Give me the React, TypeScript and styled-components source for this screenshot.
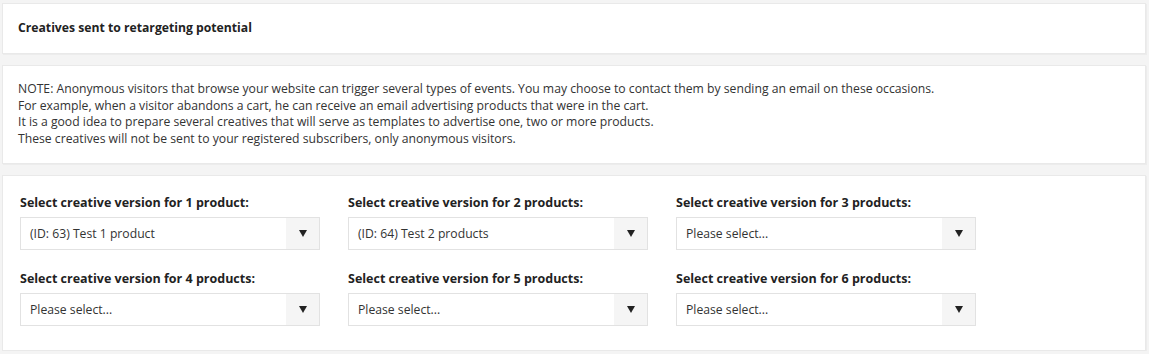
import React from "react";
import styled, { createGlobalStyle } from "styled-components";

const Global = createGlobalStyle`
  html, body { margin: 0; padding: 0; background: #f4f4f4; }
  body { font-family: "Open Sans", "DejaVu Sans", sans-serif; color: #333; }
`;

const Page = styled.div`
  display: flex;
  flex-direction: column;
  gap: 11px;
  padding: 3px 3px 0 2px;
`;

const Panel = styled.section<{ $pad: string }>`
  background: #fff;
  border: 1px solid #e9e9e9;
  box-shadow: 1px 1px 0 #ececec;
  padding: ${(p) => p.$pad};
`;

const Title = styled.h2`
  margin: 0;
  font-size: 12.2px;
  line-height: 18px;
  font-weight: 700;
  color: #222;
`;

const Note = styled.p`
  margin: 0;
  font-size: 12.2px;
  line-height: 16.67px;
  color: #333;
`;

const Grid = styled.div`
  display: grid;
  grid-template-columns: repeat(3, 300px);
  column-gap: 28px;
  row-gap: 20px;
`;

const Field = styled.div`
  display: flex;
  flex-direction: column;
  gap: 6px;
`;

const Label = styled.label`
  font-size: 12.5px;
  line-height: 17px;
  font-weight: 700;
  color: #222;
`;

const SelectBox = styled.div`
  display: flex;
  height: 33px;
  box-sizing: border-box;
  border: 1px solid #e2e2e2;
  background: #fff;
`;

const Value = styled.span`
  flex: 1;
  display: flex;
  align-items: center;
  padding-left: 9px;
  font-size: 12.2px;
  color: #333;
`;

const ArrowCell = styled.span`
  width: 33px;
  background: #f5f5f5;
  display: flex;
  align-items: center;
  justify-content: center;
`;

const Arrow = () => (
  <svg width="8" height="7" viewBox="0 0 8 7">
    <path d="M0 0 H8 L4 7 Z" fill="#222" />
  </svg>
);

const fields = [
  { n: "1 product", v: "(ID: 63) Test 1 product" },
  { n: "2 products", v: "(ID: 64) Test 2 products" },
  { n: "3 products", v: "Please select..." },
  { n: "4 products", v: "Please select..." },
  { n: "5 products", v: "Please select..." },
  { n: "6 products", v: "Please select..." },
];

export default function App() {
  return (
    <>
      <Global />
      <Page>
        <Panel $pad="15px 15px 16px">
          <Title>Creatives sent to retargeting potential</Title>
        </Panel>
        <Panel $pad="15px 15px 15px">
          <Note>
            NOTE: Anonymous visitors that browse your website can trigger several types of events. You may choose to contact them by sending an email on these occasions.
            <br />
            For example, when a visitor abandons a cart, he can receive an email advertising products that were in the cart.
            <br />
            It is a good idea to prepare several creatives that will serve as templates to advertise one, two or more products.
            <br />
            These creatives will not be sent to your registered subscribers, only anonymous visitors.
          </Note>
        </Panel>
        <Panel $pad="18px 17px 24px">
          <Grid>
            {fields.map((f) => (
              <Field key={f.n}>
                <Label>Select creative version for {f.n}:</Label>
                <SelectBox>
                  <Value>{f.v}</Value>
                  <ArrowCell>
                    <Arrow />
                  </ArrowCell>
                </SelectBox>
              </Field>
            ))}
          </Grid>
        </Panel>
      </Page>
    </>
  );
}
